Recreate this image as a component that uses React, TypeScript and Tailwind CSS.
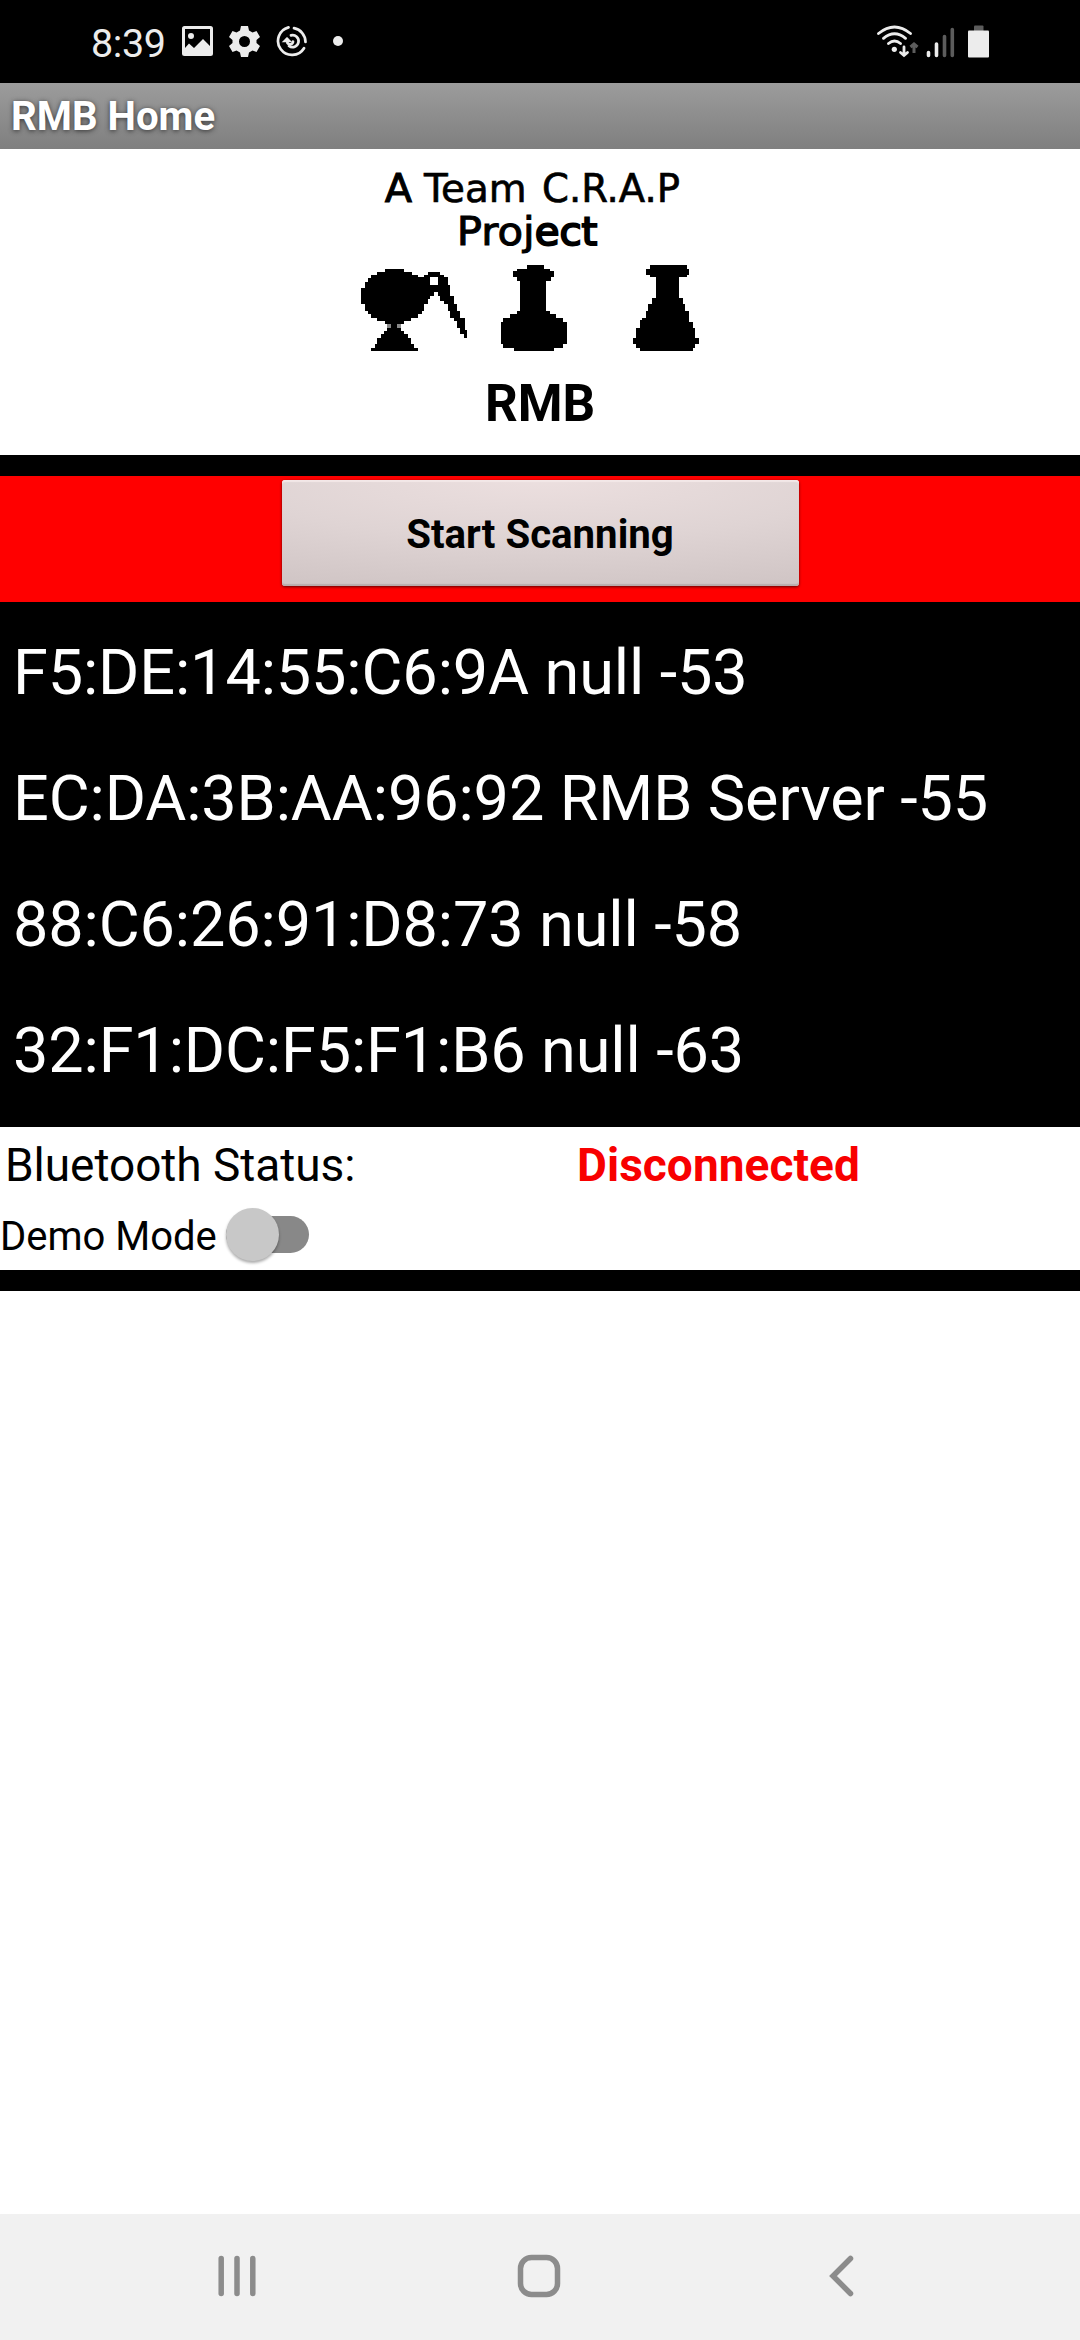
import React from "react";

const devices = [
  "F5:DE:14:55:C6:9A null -53",
  "EC:DA:3B:AA:96:92 RMB Server -55",
  "88:C6:26:91:D8:73 null -58",
  "32:F1:DC:F5:F1:B6 null -63",
];

function StatusBar() {
  return (
    <header className="flex h-[83px] shrink-0 items-start justify-between bg-black pl-[91px] pr-[89px] text-[#ececec]">
      <div className="flex">
        <span className="mt-[21px] w-[91px] text-[39.5px] leading-[46px] tracking-[-0.4px]">8:39</span>
        <svg className="mt-[26px]" width="170" height="32" viewBox="182 26 170 32" fill="none">
          <path fillRule="evenodd" fill="#ececec" d="M184.500 26h26a2.500 2.500 0 0 1 2.500 2.500v25a2.500 2.500 0 0 1-2.500 2.500h-26a2.500 2.500 0 0 1-2.500-2.500v-25a2.500 2.500 0 0 1 2.500-2.500zM185 29v19l4-4.500 5 4.500 9-9 7 7V29zM191 33a3 3 0 1 1 0 6 3 3 0 0 1 0-6z" />
          <path fillRule="evenodd" fill="#ececec" d="M241 26h7l1 4.500 3.500 2 4-1.500 3.500 6-3.500 3v3l3.500 3-3.500 6-4-1.500-3.500 2-1 4.500h-7l-1-4.500-3.500-2-4 1.500-3.500-6 3.500-3v-3l-3.500-3 3.500-6 4 1.500 3.500-2zM244.500 36a5.500 5.500 0 1 0 0 11 5.500 5.500 0 0 0 0-11z" />
          <g stroke="#ececec" strokeWidth="2.700" strokeLinecap="round">
            <path d="M294 28.200A14 14 0 0 1 305.500 42" />
            <path d="M304 48.200A14 14 0 1 1 288.500 27.400" />
            <path d="M291 35.400a6 6 0 1 1-2 10.600M293 41.500a3 3 0 0 1-5.500 1.500L287 39" />
            <path d="M283.500 41.500l3.500-3.500 3.500 3.500z" fill="#ececec" strokeWidth="1.500" />
          </g>
          <circle cx="338" cy="41" r="5" fill="#ececec" />
        </svg>
      </div>
      <svg className="mt-[24px]" width="115" height="36" viewBox="876 24 115 36" fill="none">
        <g stroke="#ececec" strokeWidth="2.800" strokeLinecap="round">
          <path d="M878.500 33.500q16-13 32 0M883.500 38.300q11-9 22 0M888.500 43.500q6-5 12 0" />
          <path d="M904 47v8M900.500 52.500l3.500 3 3.500-3" />
        </g>
        <circle cx="894.300" cy="49.300" r="2.600" fill="#ececec" />
        <path d="M914 53v-8M910.500 47l3.500-3 3.500 3" stroke="#5c5c5c" strokeWidth="3" />
        <g strokeWidth="3.600" strokeLinecap="round">
          <path stroke="#ececec" d="M928.500 52.500v3M936.500 44v11.500" />
          <path stroke="#5c5c5c" d="M944.500 36.500v19M952.300 29.500v26" />
        </g>
        <path fill="#5c5c5c" d="M974 26.500a1 1 0 0 1 1-1h7.500a1 1 0 0 1 1 1V31H974z" />
        <rect x="968" y="30.500" width="21" height="27" rx="1" fill="#ececec" />
      </svg>
    </header>
  );
}

function LogoText({ children, x, y, w, weight = 2 }: { children: string; x: number; y: number; w: number; weight?: number }) {
  return (
    <text x={x} y={y} textLength={w} lengthAdjust="spacingAndGlyphs" strokeWidth={weight}>
      {children}
    </text>
  );
}

function Logo() {
  return (
    <svg className="shrink-0" width="380" height="202" viewBox="0 0 1140 606" role="img" aria-label="A Team C.R.A.P Project">
      <g fontFamily="'DejaVu Sans', sans-serif" fontSize="119" fill="#000" stroke="#000">
        <LogoText x={134} y={156} w={82} weight={3}>A</LogoText>
        <LogoText x={252} y={156} w={308}>Team</LogoText>
        <LogoText x={606} y={156} w={414}>C.R.A.P</LogoText>
        <LogoText x={350} y={284} w={234} weight={3}>Proj</LogoText>
        <LogoText x={584} y={284} w={188} weight={6}>ect</LogoText>
      </g>
      <g transform="translate(0 300)" shapeRendering="crispEdges">
        <path fill="#888" d="M142 222H184V235H142Z" />
        <path fillRule="evenodd" d="M135 56H191V65H215V74H233V82H252V74H263V65H299V74H311V82H323V106H331V137H343V162H350V183H361V205H374V240H380V265H373V251H361V235H350V213H343V205H331V183H323V162H313V154H301V137H293V125H282V137H271V146H263V162H251V183H245V192H233V205H214V213H191V222H172V235H184V243H193V252H203V265H214V283H222V295H233V302H93V295H105V283H112V265H123V252H133V243H142V235H154V222H135V213H112V205H93V192H85V183H74V162H62V114H74V95H85V83H93V74H112V65H135ZM271 82V105H293V82Z" />
        <path d="M562 45H611V56H630V64H641V82H632V94H619V184H630V193H649V205H668V215H680V283H668V295H641V302H521V295H490V283H482V215H490V205H509V193H532V184H539V94H532V82H520V64H532V56H562Z" />
        <path d="M929 45H1040V56H1047V74H1040V82H1017V144H1028V163H1036V184H1047V215H1058V235H1066V265H1077V283H1066V295H1058V302H899V295H888V283H880V265H888V235H899V211H906V205H918V184H925V163H937V144H949V82H929V74H918V56H929Z" />
      </g>
    </svg>
  );
}

export default function App() {
  return (
    <div className="flex h-[2340px] w-[1080px] flex-col overflow-hidden bg-white text-black" style={{ fontFamily: "Roboto, sans-serif" }}>
      <StatusBar />
      <div className="flex h-[66px] shrink-0 items-center bg-linear-to-b from-[#9c9c9c] to-[#7f7f7f] pt-[2px] pl-[11px]">
        <h1 className="text-[40.2px] leading-[46px] font-bold text-white [text-shadow:0_1px_5px_#333]">RMB Home</h1>
      </div>
      <section className="flex h-[306px] shrink-0 flex-col pl-[340px]">
        <div className="pt-px">
          <Logo />
        </div>
        <h2 className="w-[400px] pl-[145px] text-[51.2px] leading-[104px] font-bold">RMB</h2>
      </section>
      <div className="h-[21px] shrink-0 bg-black" />
      <div className="flex h-[126px] shrink-0 justify-center bg-[#ff0000] pt-[4px]">
        <button className="h-[106px] w-[517px] rounded-[3px] bg-[radial-gradient(ellipse_120%_110%_at_50%_0%,#ecdfdf_0%,#dfd4d4_50%,#cfc4c4_100%)] pt-[4px] text-[40.2px] font-bold shadow-[inset_0_2px_1px_#f3e8e8,inset_0_-2px_1px_#b8acac,0_1px_3px_#600000]">
          Start Scanning
        </button>
      </div>
      <ul className="h-[525px] shrink-0 bg-black pt-[8px] pl-[13px] text-white">
        {devices.map((device) => (
          <li key={device} className="flex h-[126px] items-center text-[63px] tracking-[-0.13px] whitespace-nowrap">
            {device}
          </li>
        ))}
      </ul>
      <section className="flex h-[143px] shrink-0 flex-col">
        <div className="flex h-[76px] items-center pt-[1px] text-[46px]">
          <span className="w-[577px] pl-[5px] tracking-[-0.05px]">Bluetooth Status:</span>
          <span className="font-bold tracking-[0.05px] text-[#f80000]">Disconnected</span>
        </div>
        <div className="flex h-[67px]">
          <span className="w-[226px] text-[40px] leading-[67px]">Demo Mode</span>
          <div className="relative mt-[13px] h-[37px] w-[83px] rounded-full bg-[#888]">
            <span className="absolute -top-[8px] left-0 size-[53px] rounded-full bg-[#c8c8c8] shadow-[0_2px_3px_#0005]" />
          </div>
        </div>
      </section>
      <div className="h-[21px] shrink-0 bg-black" />
      <main className="grow" />
      <nav className="flex h-[126px] shrink-0 items-center bg-[#f1f1f1] pl-[216px]">
        <svg width="650" height="62" viewBox="216 2245 650 62" fill="none" stroke="#8c8c8c" strokeWidth="5.500" strokeLinecap="round">
          <path d="M221.200 2257.500v35M237 2257.500v35M252.800 2257.500v35" />
          <rect x="520.500" y="2256.500" width="37" height="37" rx="11" />
          <path d="M850.500 2257.500L833 2275l17.500 17.500" />
        </svg>
      </nav>
    </div>
  );
}
